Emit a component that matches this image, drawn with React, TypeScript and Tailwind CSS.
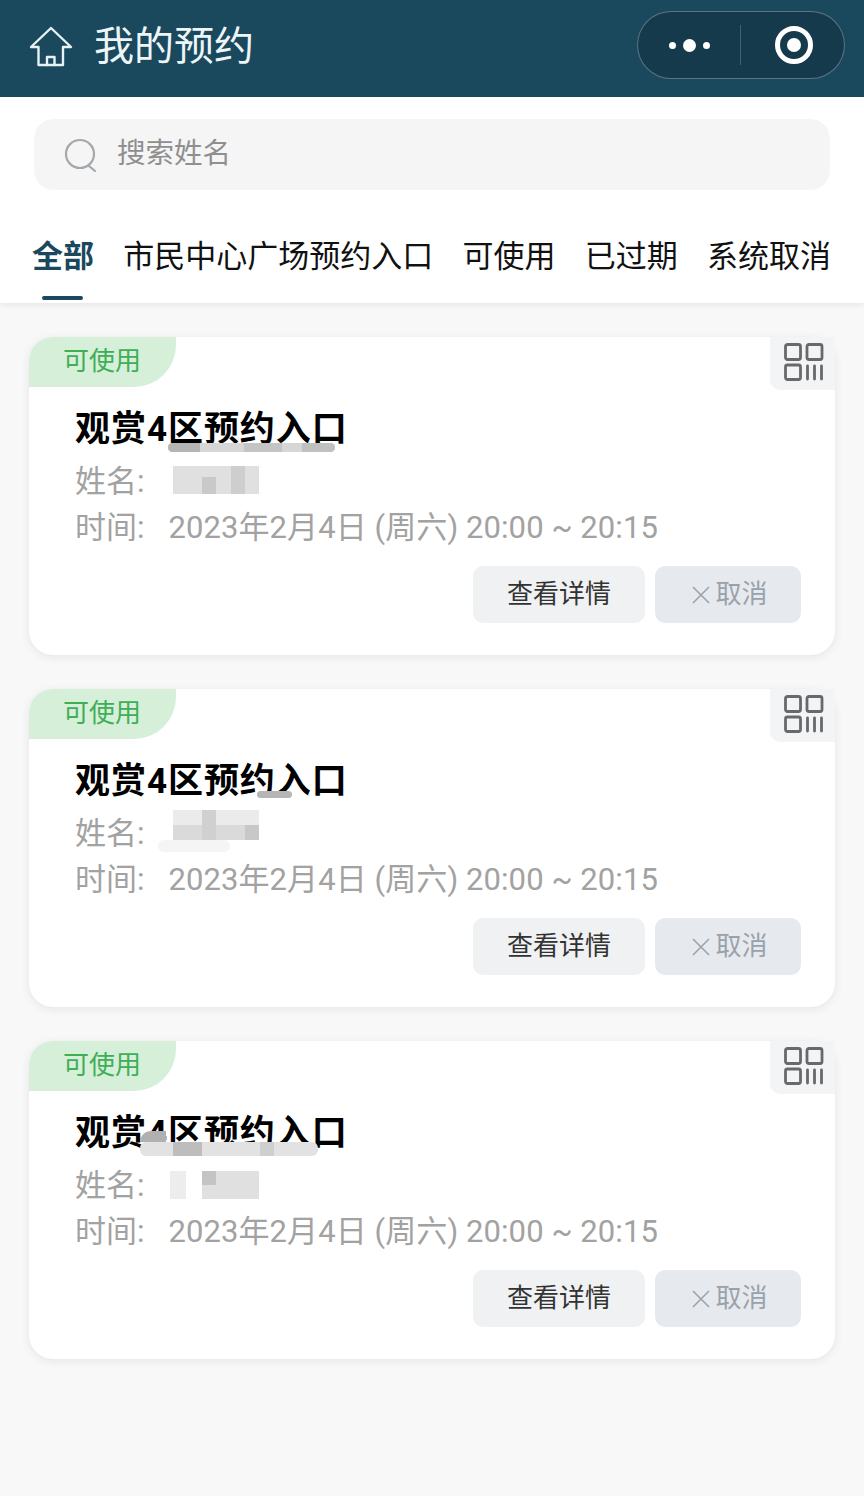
import React from "react";

const FONT = "[font-family:Roboto,'Noto_Sans_CJK_SC',sans-serif]";

function HomeIcon() {
  return (
    <svg width="44" height="42" viewBox="0 0 44 42" fill="none" stroke="#e8f1f4" strokeWidth="2.4" strokeLinejoin="round" strokeLinecap="round">
      <path d="M2 21 L22 2 L42 21 H34 V39 H9.5 V21 Z" />
      <path d="M18 39 V31 H25.5 V39" />
    </svg>
  );
}

function SearchIcon() {
  return (
    <svg width="34" height="34" viewBox="0 0 34 34" fill="none" stroke="#a3a8ab" strokeWidth="2.2" strokeLinecap="round">
      <circle cx="16" cy="16" r="14" />
      <path d="M25 28 L31 33" />
    </svg>
  );
}

function QrIcon() {
  return (
    <svg width="40" height="38" viewBox="0 0 40 38" fill="none" stroke="#666a6c" strokeWidth="2.8" strokeLinecap="round">
      <rect x="1.5" y="1.5" width="15" height="15" rx="2" />
      <rect x="23" y="1.5" width="15" height="15" rx="2" />
      <rect x="1.5" y="22" width="15" height="14.5" rx="2" />
      <path d="M23.5 23 V36 M30.5 23 V36 M37.5 23 V36" />
    </svg>
  );
}

function CloseIcon() {
  return (
    <svg width="18" height="18" viewBox="0 0 18 18" fill="none" stroke="#9aa3ab" strokeWidth="1.6">
      <path d="M1 1 L17 17 M17 1 L1 17" />
    </svg>
  );
}

const patches: string[][] = [
  [
    "left-[139px] top-[106px] w-[167px] h-[9px] rounded-full bg-[#d6d6d6]",
    "left-[139px] top-[106px] w-[32px] h-[9px] rounded-l-full bg-[#b4b4b4]",
    "left-[215px] top-[106px] w-[38px] h-[9px] bg-[#c4c4c4]",
    "left-[273px] top-[106px] w-[33px] h-[9px] rounded-r-full bg-[#c0c0c0]",
    "left-[144px] top-[129px] w-[86px] h-[28px] bg-[#e0e0e0]",
    "left-[173px] top-[140px] w-[14px] h-[17px] bg-[#c9c9c9]",
    "left-[202px] top-[129px] w-[14px] h-[28px] bg-[#cecece]",
  ],
  [
    "left-[228px] top-[102px] w-[35px] h-[7px] rounded-full bg-[#b5b5b5]",
    "left-[129px] top-[151px] w-[72px] h-[12px] rounded-full bg-[#f5f5f5]",
    "left-[144px] top-[121px] w-[86px] h-[15px] bg-[#ebebeb]",
    "left-[144px] top-[136px] w-[86px] h-[15px] bg-[#dadada]",
    "left-[173px] top-[121px] w-[14px] h-[30px] bg-[#d0d0d0]",
    "left-[216px] top-[136px] w-[14px] h-[15px] bg-[#c8c8c8]",
  ],
  [
    "left-[111px] top-[101px] w-[178px] h-[14px] rounded-md bg-[#e2e2e2]",
    "left-[111px] top-[90px] w-[26px] h-[11px] rounded-tl-full bg-[#b0b0b0]",
    "left-[144px] top-[101px] w-[29px] h-[14px] bg-[#bdbdbd]",
    "left-[231px] top-[101px] w-[14px] h-[14px] bg-[#cfcfcf]",
    "left-[141px] top-[130px] w-[16px] h-[28px] bg-[#ededed]",
    "left-[173px] top-[130px] w-[57px] h-[28px] bg-[#e0e0e0]",
    "left-[173px] top-[130px] w-[14px] h-[14px] bg-[#c4c4c4]",
  ],
];

function Card({ marks }: { marks: string[] }) {
  return (
    <div className="relative h-[318px] rounded-[24px] bg-white pl-[46px] pr-[34px] pt-[71px] shadow-[0_2px_10px_rgba(0,0,0,0.08)]">
      <div className="absolute left-0 top-0 flex h-[50px] w-[147px] items-center rounded-tl-[24px] rounded-br-[42px] bg-[#d5efd9] pb-[3px] pl-[34px] text-[26px] leading-none text-[#3fae57]">
        可使用
      </div>
      <div className="absolute right-0 top-0 flex h-[53px] w-[65px] items-center justify-center rounded-bl-[10px] bg-[#f3f4f5] pb-[4px] pl-[3px]">
        <QrIcon />
      </div>
      <div className="text-[35px] font-bold leading-[44px] tracking-[0.95px] text-black">观赏4区预约入口</div>
      <div className="mt-[6px] flex h-[46px] items-center text-[31px] leading-none text-[#a2a2a2]">姓名:</div>
      <div className="flex h-[46px] items-center whitespace-nowrap text-[31px] leading-none text-[#a2a2a2]">
        时间:<span className="ml-[24px] tracking-[0.08px]">2023年2月4日 (周六) 20:00 ~ 20:15</span>
      </div>
      <div className="mt-[16px] flex justify-end gap-[10px]">
        <div className="flex h-[57px] w-[172px] items-center justify-center rounded-[10px] bg-[#f0f1f2] text-[26px] text-[#333333]">查看详情</div>
        <div className="flex h-[57px] w-[146px] items-center justify-center gap-[5px] rounded-[10px] bg-[#e6eaef] pl-[4px] text-[26px] text-[#99a2aa]">
          <CloseIcon />
          取消
        </div>
      </div>
      {marks.map((m, i) => (
        <div key={i} className={`absolute blur-[0.7px] ${m}`} />
      ))}
    </div>
  );
}

export default function App() {
  return (
    <div className={`flex min-h-[1496px] w-[864px] flex-col bg-[#f8f8f9] ${FONT}`}>
      <header className="flex h-[97px] items-center justify-between bg-[#1a495e] pb-[7px] pl-[29px] pr-[19px]">
        <div className="mt-[3px] flex items-center gap-[21px]">
          <HomeIcon />
          <span className="text-[40px] leading-none text-[#eef5f7]">我的预约</span>
        </div>
        <div className="flex h-[68px] w-[208px] items-center rounded-full border border-white/30 bg-[#153a4c]">
          <div className="flex w-[102px] items-center justify-center gap-[7px]">
            <span className="size-[7px] rounded-full bg-white" />
            <span className="size-[13px] rounded-full bg-white" />
            <span className="size-[7px] rounded-full bg-white" />
          </div>
          <div className="h-[40px] w-px bg-white/20" />
          <div className="flex flex-1 items-center justify-center pl-[2px]">
            <span className="flex size-[38px] items-center justify-center rounded-full border-[5px] border-white">
              <span className="size-[14px] rounded-full bg-white" />
            </span>
          </div>
        </div>
      </header>

      <div className="h-[206px] bg-white shadow-[0_2px_6px_rgba(0,0,0,0.08)]">
        <div className="px-[34px] pt-[22px]">
          <div className="flex h-[71px] items-center gap-[19px] rounded-[20px] bg-[#f5f5f6] pl-[30px]">
            <SearchIcon />
            <span className="text-[28.5px] leading-none text-[#8f8f8f]">搜索姓名</span>
          </div>
        </div>
        <div className="mt-[42px] flex justify-between pl-[32px] pr-[33px] text-[31px] leading-[50px] text-[#111111]">
          <div className="relative font-bold text-[#1a495e]">
            全部
            <div className="absolute left-[10px] top-[64px] h-[4px] w-[41px] rounded-full bg-[#1a495e]" />
          </div>
          <div>市民中心广场预约入口</div>
          <div>可使用</div>
          <div>已过期</div>
          <div>系统取消</div>
        </div>
      </div>

      <main className="flex flex-col gap-[34px] px-[29px] pt-[34px]">
        {patches.map((marks, i) => (
          <Card key={i} marks={marks} />
        ))}
      </main>
    </div>
  );
}
